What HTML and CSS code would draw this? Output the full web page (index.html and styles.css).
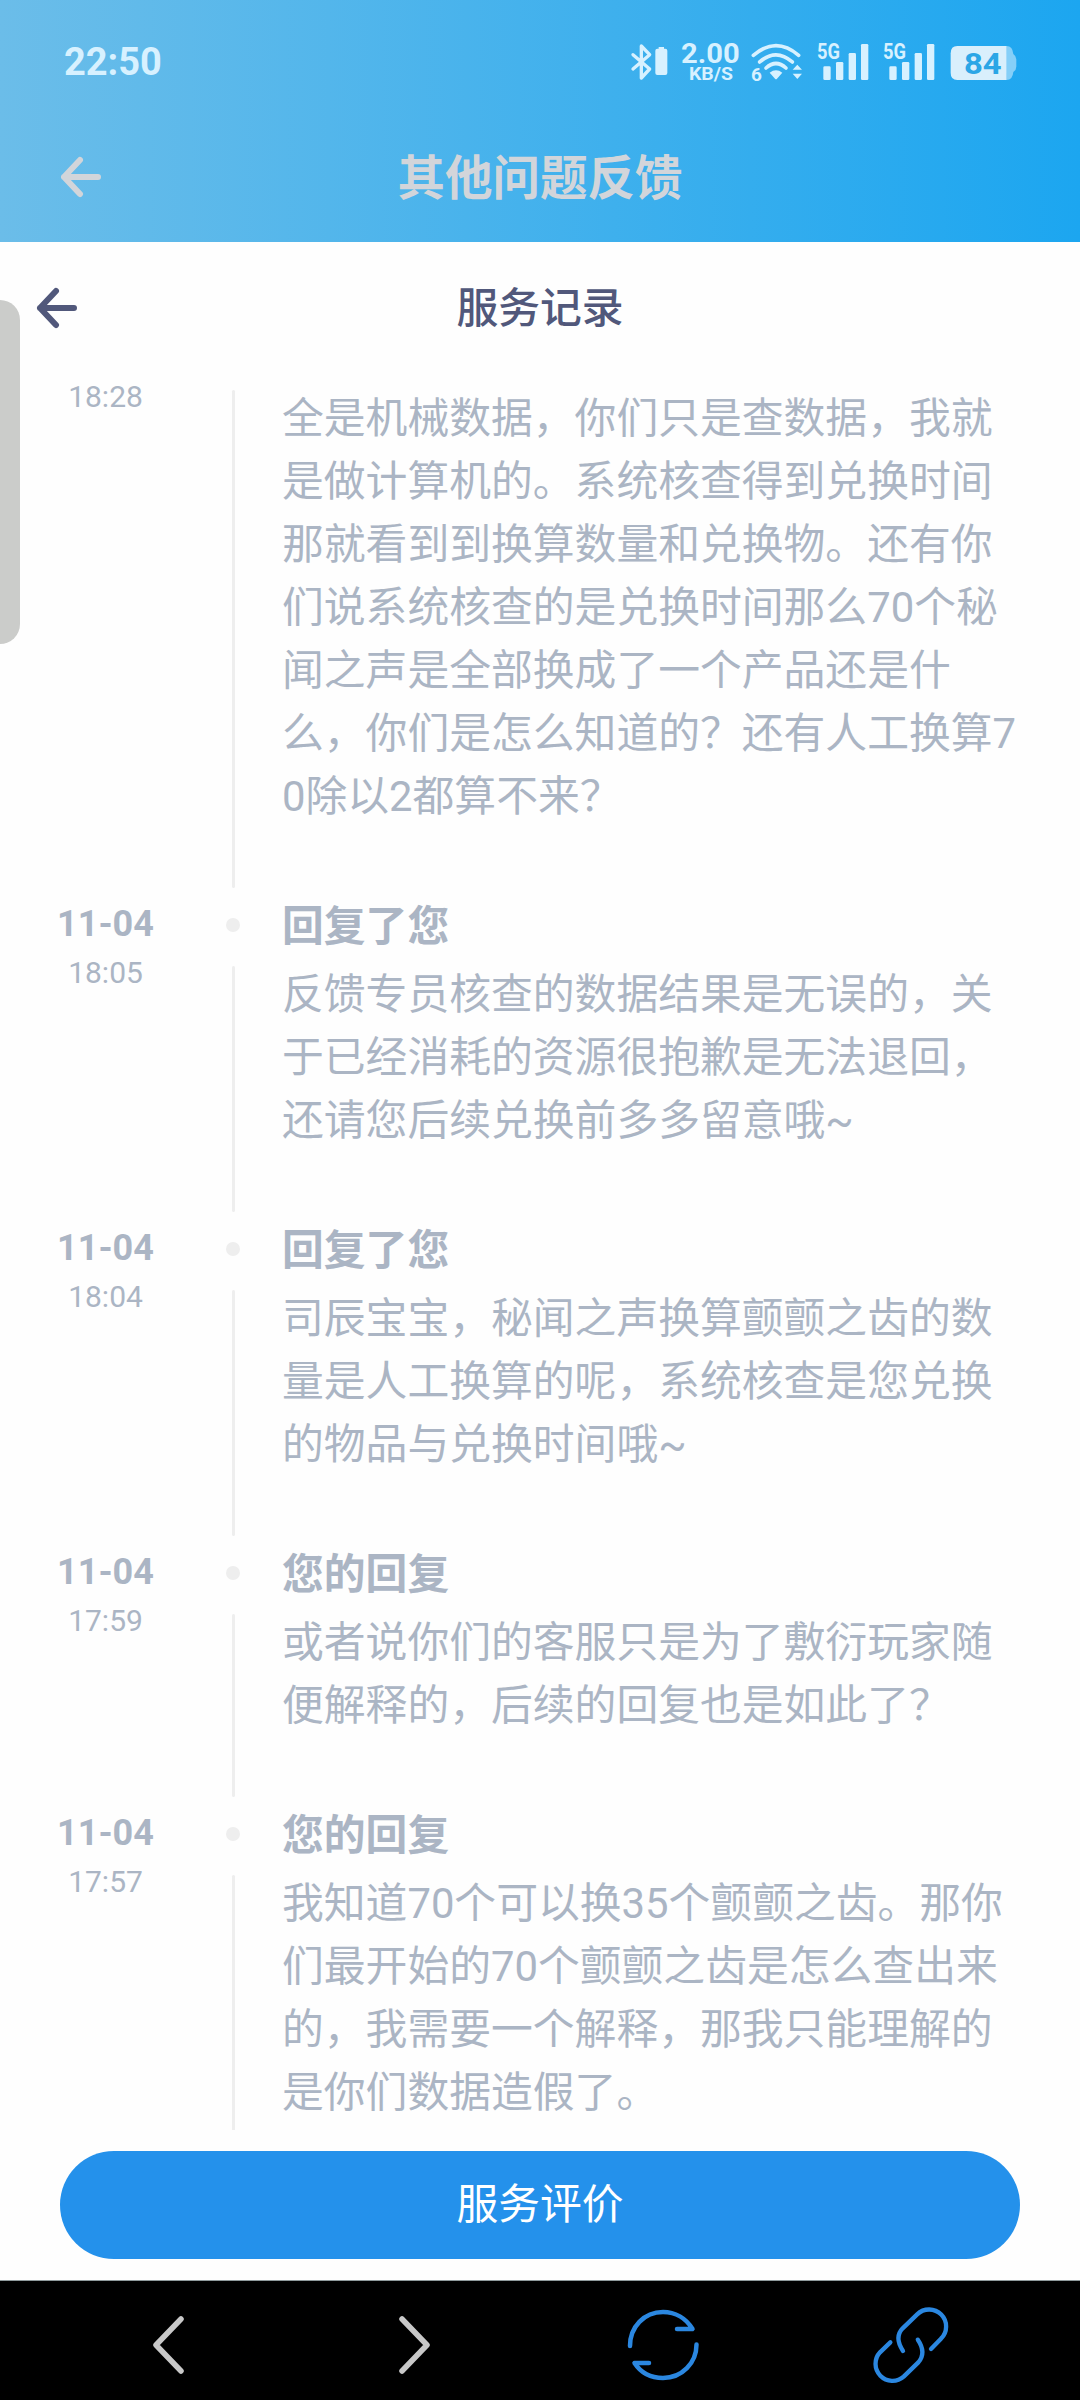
FILE: index.html
```html
<!DOCTYPE html>
<html lang="zh-CN">
<head>
    <meta charset="UTF-8">
    <meta name="viewport" content="width=device-width, initial-scale=1.0">
    <title>服务记录</title>
    <link rel="stylesheet" href="styles.css">
</head>
<body>
    <header class="header">
        <div class="status-bar">
            <span class="clock">22:50</span>
            <div class="status-icons">
                <svg class="bluetooth" viewBox="92 60 118 130">
                    <path d="M101 104 L151 147 L126 174 V78 L151 104 L101 147" fill="none" stroke="currentColor" stroke-width="10" stroke-linecap="round" stroke-linejoin="round"/>
                    <path d="M178 81 H194 V86 H198 Q204 86 204 92 V159 Q204 165 198 165 H174 Q168 165 168 159 V92 Q168 86 174 86 H178 Z" fill="currentColor"/>
                </svg>
                <svg class="speed" viewBox="240 60 180 130">
                    <text x="243" y="130" font-size="83" textLength="176" lengthAdjust="spacingAndGlyphs">2.00</text>
                    <text x="267" y="179" font-size="55" textLength="132" lengthAdjust="spacingAndGlyphs">KB/S</text>
                </svg>
                <svg class="wifi" viewBox="450 60 162 130">
                    <g fill="none" stroke="currentColor" stroke-width="11" stroke-linecap="round">
                        <path d="M460 106 Q528 48 596 106"/>
                        <path d="M479 126 Q528 83 577 126"/>
                        <path d="M498 144 Q528 117 558 144"/>
                    </g>
                    <path d="M509 158 Q528 144 547 158 L531 176 Q528 179 525 176 Z" fill="currentColor"/>
                    <path d="M578 149 L592 134 L606 149 Z M578 161 L592 177 L606 161 Z" fill="currentColor"/>
                    <text x="453" y="183" font-size="57">6</text>
                </svg>
                <svg class="signal" viewBox="645 60 162 130">
                    <text x="648" y="117" font-size="66" textLength="69" lengthAdjust="spacingAndGlyphs">5G</text>
                    <g fill="currentColor">
                        <rect x="667" y="139" width="22" height="41" rx="4"/>
                        <rect x="705" y="126" width="22" height="54" rx="4"/>
                        <rect x="743" y="99" width="22" height="81" rx="4"/>
                        <rect x="780" y="72" width="22" height="108" rx="4"/>
                    </g>
                </svg>
                <svg class="signal" viewBox="645 60 162 130">
                    <text x="648" y="117" font-size="66" textLength="69" lengthAdjust="spacingAndGlyphs">5G</text>
                    <g fill="currentColor">
                        <rect x="667" y="139" width="22" height="41" rx="4"/>
                        <rect x="705" y="126" width="22" height="54" rx="4"/>
                        <rect x="743" y="99" width="22" height="81" rx="4"/>
                        <rect x="780" y="72" width="22" height="108" rx="4"/>
                    </g>
                </svg>
                <svg class="battery" viewBox="1045 60 205 130">
                    <path d="M1218 78 Q1236 78 1238 102 Q1247 108 1247 118 V140 Q1247 150 1238 156 Q1236 180 1218 180 Z" fill="#85cff8"/>
                    <path d="M1218 78 H1070 Q1050 78 1050 100 V158 Q1050 180 1070 180 H1218 Z" fill="#d9effc"/>
                    <text class="level" x="1090" y="163" font-size="91" textLength="113" lengthAdjust="spacingAndGlyphs">84</text>
                </svg>
            </div>
        </div>
        <div class="title-bar">
            <svg class="arrow" viewBox="0 0 42 42">
                <path d="M21 4 L5 21 L21 38 M5 21 H39"/>
            </svg>
            <h1>其他问题反馈</h1>
        </div>
    </header>

    <div class="drawer-handle"></div>

    <main class="panel">
        <div class="panel-title">
            <svg class="arrow" viewBox="0 0 42 42">
                <path d="M21 4 L5 21 L21 38 M5 21 H39"/>
            </svg>
            <h2>服务记录</h2>
        </div>

        <div class="records">
            <div class="record scrolled">
                <div class="when">
                    <span class="time">18:28</span>
                </div>
                <div class="rail"><i class="line"></i></div>
                <div class="content">
                    <p>全是机械数据，你们只是查数据，我就<br>是做计算机的。系统核查得到兑换时间<br>那就看到到换算数量和兑换物。还有你<br>们说系统核查的是兑换时间那么70个秘<br>闻之声是全部换成了一个产品还是什<br>么，你们是怎么知道的？还有人工换算7<br>0除以2都算不来？</p>
                </div>
            </div>
            <div class="record">
                <div class="when">
                    <span class="date">11-04</span>
                    <span class="time">18:05</span>
                </div>
                <div class="rail"><i class="dot"></i><i class="line"></i></div>
                <div class="content">
                    <h3>回复了您</h3>
                    <p>反馈专员核查的数据结果是无误的，关<br>于已经消耗的资源很抱歉是无法退回，<br>还请您后续兑换前多多留意哦~</p>
                </div>
            </div>
            <div class="record">
                <div class="when">
                    <span class="date">11-04</span>
                    <span class="time">18:04</span>
                </div>
                <div class="rail"><i class="dot"></i><i class="line"></i></div>
                <div class="content">
                    <h3>回复了您</h3>
                    <p>司辰宝宝，秘闻之声换算颤颤之齿的数<br>量是人工换算的呢，系统核查是您兑换<br>的物品与兑换时间哦~</p>
                </div>
            </div>
            <div class="record">
                <div class="when">
                    <span class="date">11-04</span>
                    <span class="time">17:59</span>
                </div>
                <div class="rail"><i class="dot"></i><i class="line"></i></div>
                <div class="content">
                    <h3>您的回复</h3>
                    <p>或者说你们的客服只是为了敷衍玩家随<br>便解释的，后续的回复也是如此了？</p>
                </div>
            </div>
            <div class="record">
                <div class="when">
                    <span class="date">11-04</span>
                    <span class="time">17:57</span>
                </div>
                <div class="rail"><i class="dot"></i><i class="line"></i></div>
                <div class="content">
                    <h3>您的回复</h3>
                    <p>我知道70个可以换35个颤颤之齿。那你<br>们最开始的70个颤颤之齿是怎么查出来<br>的，我需要一个解释，那我只能理解的<br>是你们数据造假了。</p>
                </div>
            </div>
        </div>

        <button class="rate-btn">服务评价</button>
    </main>

    <nav class="toolbar">
        <a class="tool">
            <svg class="chevron" viewBox="0 0 32 58"><path d="M29 3 L4 29 L29 55"/></svg>
        </a>
        <a class="tool">
            <svg class="chevron" viewBox="0 0 32 58"><path d="M3 3 L28 29 L3 55"/></svg>
        </a>
        <a class="tool">
            <svg class="refresh" viewBox="0 0 74 74">
                <path d="M4 38 C4 19 18 4 37 4 C49 4 60 10 66.5 21 H51"/>
                <path d="M70.5 36.5 C70.5 55 56 70 37 70 C25 70 15 65 8.500 55 H23"/>
            </svg>
        </a>
        <a class="tool">
            <svg class="link" viewBox="0 0 240 240">
                <path d="M183 132 L213 101 A51 51 0 0 0 141.5 28 L98 70 Q72 97 99 138"/>
                <path d="M61 112 L30 142 A51 51 0 0 0 101 215 L145 172 Q170 143 143.5 104"/>
            </svg>
        </a>
    </nav>
</body>
</html>
```
FILE: styles.css
```css
:root {
    --text-muted: #abb5c4;
    --title-color: #51587b;
    --line-color: #eeeeee;
    --button-color: #2491eb;
}

* {
    box-sizing: border-box;
}

body {
    margin: 0;
    width: 1080px;
    height: 2400px;
    display: flex;
    flex-direction: column;
    position: relative;
    overflow: hidden;
    background: #fefefe;
    font-family: Roboto, "Noto Sans CJK SC", sans-serif;
}

h1, h2, h3, p {
    margin: 0;
}

svg {
    display: block;
}

.header {
    height: 242px;
    background: linear-gradient(90deg, #6bbde9 0%, #1ca6f0 100%);
}

/* Status bar */
.status-bar {
    height: 124px;
    padding: 0 63px 0 64px;
    display: flex;
    align-items: center;
    justify-content: space-between;
    color: #d7f1ff;
}

.clock {
    font-size: 38px;
    font-weight: 700;
}

.status-icons {
    display: flex;
    gap: 10px;
}

.status-icons svg {
    height: 43.33px;
    overflow: visible;
}

.status-icons text {
    font-family: Roboto, sans-serif;
    font-weight: 700;
    fill: currentColor;
}

.status-icons .level {
    fill: #2ba6e6;
}

.signal {
    margin-left: 2px;
}

.battery {
    margin-left: 3px;
}

/* Title bars */
.title-bar {
    height: 106px;
    display: flex;
    align-items: center;
    padding-left: 59px;
    color: #d2d5da;
}

.title-bar h1 {
    flex: 1;
    margin-right: 101px;
    padding-top: 3px;
    text-align: center;
    font-size: 47.500px;
    line-height: 70px;
    font-weight: 700;
}

.arrow {
    width: 42px;
    height: 42px;
    fill: none;
    stroke: currentColor;
    stroke-width: 6;
    stroke-linecap: round;
    stroke-linejoin: round;
}

.panel {
    flex: 1;
    min-height: 0;
    display: flex;
    flex-direction: column;
}

.panel-title {
    height: 132px;
    display: flex;
    align-items: center;
    padding-left: 35px;
    color: var(--title-color);
}

.panel-title h2 {
    flex: 1;
    margin-right: 77px;
    text-align: center;
    font-size: 41.800px;
    line-height: 63px;
    font-weight: 500;
}

.drawer-handle {
    position: absolute;
    left: 0;
    top: 300px;
    width: 20px;
    height: 344px;
    border-radius: 0 20px 20px 0;
    background: #cbccca;
}

/* Timeline */
.records {
    height: 1756px;
    overflow: hidden;
    color: var(--text-muted);
}

.record {
    display: flex;
}

.when {
    width: 211px;
    padding-top: 15px;
    display: flex;
    flex-direction: column;
    align-items: center;
}

.date {
    font-size: 36px;
    line-height: 42px;
    font-weight: 700;
}

.time {
    margin-top: 10px;
    font-size: 30px;
    line-height: 36px;
}

.rail {
    width: 44px;
    padding-top: 30px;
    display: flex;
    flex-direction: column;
    align-items: center;
}

.dot {
    width: 14px;
    height: 14px;
    margin-bottom: 34px;
    border-radius: 50%;
    background: var(--line-color);
}

.line {
    flex: 1;
    width: 3px;
    border-radius: 2px;
    background: var(--line-color);
}

.content {
    padding: 7px 0 60px 27px;
}

.content h3 {
    margin-bottom: 5px;
    font-size: 41.800px;
    line-height: 63px;
    font-weight: 700;
}

.content p {
    font-size: 41.800px;
    line-height: 63px;
    white-space: nowrap;
}

/* First record is scrolled past its heading */
.scrolled .when {
    padding-top: 0;
    margin-top: -5px;
}

.scrolled .rail {
    padding-top: 16px;
}

.scrolled .content {
    padding-top: 13px;
}

.rate-btn {
    margin: 21px 60px 0;
    padding: 0 0 2px;
    height: 108px;
    border: none;
    border-radius: 54px;
    background: var(--button-color);
    color: #ffffff;
    font-family: inherit;
    font-size: 41.800px;
    line-height: 63px;
}

/* Bottom toolbar */
.toolbar {
    height: 120px;
    padding: 16px 46px 0 44px;
    border-top: 1px solid #8f9a9c;
    display: flex;
    background: #000000;
}

.tool {
    flex: 1;
    height: 96px;
    display: flex;
    align-items: center;
    justify-content: center;
}

.tool svg {
    fill: none;
    stroke: #2b87e0;
    stroke-width: 4.500;
    stroke-linecap: round;
    stroke-linejoin: round;
}

.tool .chevron {
    width: 32px;
    height: 58px;
    stroke: #c8c8c8;
    stroke-width: 5.500;
}

.refresh {
    width: 74px;
    height: 74px;
}

.tool .link {
    width: 80px;
    height: 80px;
    stroke-width: 13;
}
```
